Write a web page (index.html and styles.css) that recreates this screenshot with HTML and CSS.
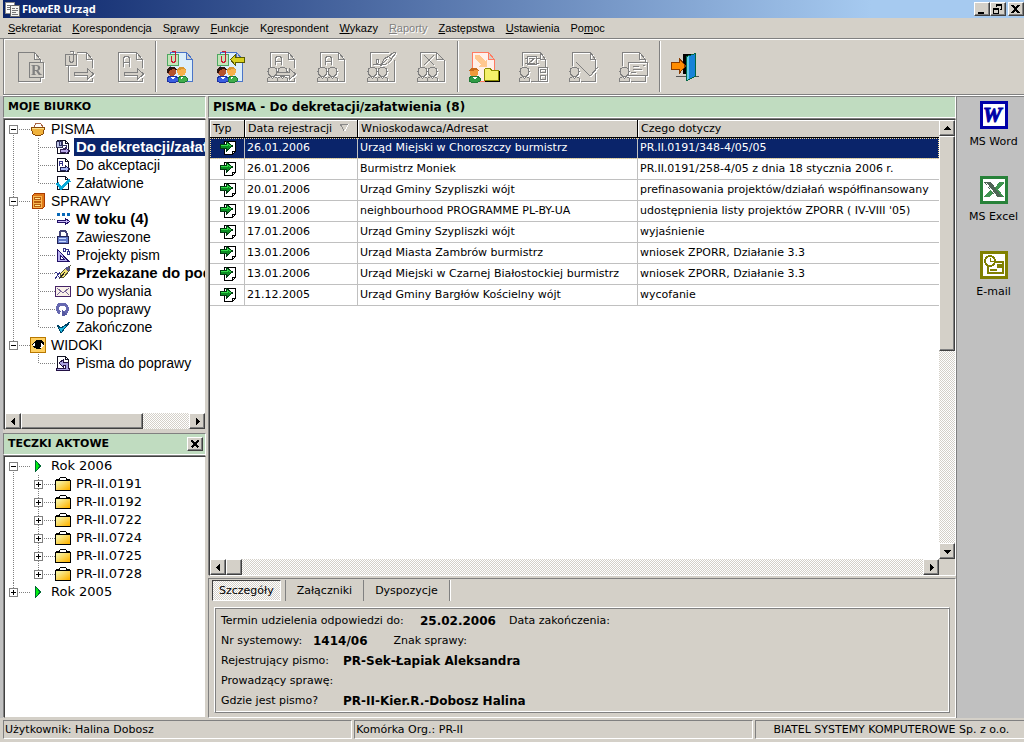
FILE: index.html
```html
<!DOCTYPE html>
<html lang="pl">
<head>
    <meta charset="UTF-8">
    <meta name="viewport" content="width=device-width, initial-scale=1.0">
    <title>FlowER Urząd</title>
    <link rel="stylesheet" href="styles.css">
</head>
<body>

<!-- icon shapes used more than once -->
<svg class="defs" width="0" height="0">
    <symbol id="doc" viewBox="0 0 32 32"><path d="M4.500 1.500h16l6 7v22h-22zM20.500 1.500v7h6"/></symbol>
    <symbol id="clip" viewBox="0 0 32 32"><path d="M1.500 3.500h11v11h-11z"/><path class="clip-wire" d="M5.500 5v5l1 1h2l1-1V1l-1-1H7L6 1"/></symbol>
    <symbol id="man" viewBox="0 0 32 32"><path d="M3 17.500l2-1h3l2 1 1 3-1 3-2 2H5l-2-2-1-3zM1.500 30.500v-3l3-2 2 2 2-2 3 2v3z"/></symbol>
    <symbol id="men" viewBox="0 0 32 32"><path d="M3 17.500l2-1h3l2 1 1 3-1 3-2 2H5l-2-2-1-3zM13 17.500l2-1h3l2 1 1 3-1 3-2 2h-3l-2-2-1-3zM1.500 30.500v-3l3-2 2 2 2-2 3 2v3zM11.500 30.500v-3l3-2 2 2 2-2 3 2v3z"/></symbol>
    <symbol id="arrow" viewBox="0 0 32 32"><path d="M10.500 21.500h13v-4l6 5.500-6 5.500v-4h-13z"/></symbol>
    <symbol id="people" viewBox="0 0 32 32">
        <path d="M1 30v-3l3-2h5l3 2v3l-2 1H3z" fill="#3a5fe0" stroke="#1c2fa0"/>
        <path d="M12 30v-3l3-2h4l2 2v3l-2 1h-6z" fill="#3fae4c" stroke="#1f7a35"/>
        <circle cx="6" cy="20.500" r="4.500" fill="#b5532c" stroke="none"/><path d="M1 22v-4l3-2h5l2 3-4-1-3 1-1 3z" fill="#2a1210" stroke="none"/>
        <circle cx="15.500" cy="20.500" r="4.500" fill="#f6b04a" stroke="none"/><path d="M11 20v-2l3-2h4l2 3-3-1-4 1z" fill="#d9962e" stroke="none"/>
        <path d="M5 26l2 3 2-3M15 26l1 3 1-3" fill="#fff" stroke="none"/>
    </symbol>
    <symbol id="incoming" viewBox="0 0 16 16">
        <path d="M4.500 1.500h11v10l-3 3h-8z" fill="#fff" stroke="#000"/><path d="M12.500 14v-2.500H15" fill="none" stroke="#000"/>
        <path d="M.5 4.500h6v-3l6 4.500-6 5v-3h-6z" fill="#0b8c22" stroke="#003c10"/><path d="M1 5.500h6.500v-2l3 2.500" fill="none" stroke="#35e04c"/>
    </symbol>
    <symbol id="folder" viewBox="0 0 16 16">
        <path d="M4.500 4V2.500l1-1h5l1 1V4" fill="none" stroke="#000"/><path d="M1 3.500h3M12 3.500h3" stroke="#000"/>
        <path d="M.5 4.500h15v10H.5z" fill="url(#gold)" stroke="#000"/>
    </symbol>
    <linearGradient id="gold" x1="0" y1="0" x2="1" y2="1"><stop offset=".2" stop-color="#f7ef9a"/><stop offset=".9" stop-color="#ffb400"/></linearGradient>
    <symbol id="play" viewBox="0 0 16 16"><path d="M5.500 2.500v11l5-5.500z" fill="#0e1" stroke="#063"/></symbol>
    <symbol id="page" viewBox="0 0 16 16"><path d="M2.500 1.500h8l3 3v10h-11z" fill="#fff" stroke="#112"/><path d="M10.500 1.500v3h3" fill="none" stroke="#112"/></symbol>
    <symbol id="left" viewBox="0 0 7 7"><path d="M5 0v7L1 3.500z"/></symbol>
    <symbol id="right" viewBox="0 0 7 7"><path d="M2 0v7l4-3.500z"/></symbol>
    <symbol id="up" viewBox="0 0 7 7"><path d="M0 5h7L3.500 1z"/></symbol>
    <symbol id="down" viewBox="0 0 7 7"><path d="M0 2h7L3.500 6z"/></symbol>
</svg>

<div class="window">
    <header class="titlebar">
        <svg class="app-icon" width="16" height="16" viewBox="0 0 16 16"><path d="M.5 1.500h9v11h-9z" fill="#fff" stroke="#888"/><path d="M5.500 4.500h9v11h-9z" fill="#f4f4ee" stroke="#666"/><path d="M2 4h5M2 6h3M2 8h3M7 7.500h3M11 7.500h2M7 9.500h6M7 11.500h4M7 13.500h6" stroke="#777"/></svg>
        <h1>FlowER Urząd</h1>
        <div class="window-buttons">
            <button class="win-btn" aria-label="Minimalizuj"><svg width="10" height="10" viewBox="0 0 10 10"><path d="M1 8h6v2H1z"/></svg></button>
            <button class="win-btn" aria-label="Przywróć"><svg width="10" height="10" viewBox="0 0 10 10"><path d="M3.500 3V.5h5v5H7M3 1.500h6M.5 4.500h5v5h-5zM0 5.500h6" fill="none" stroke="#000"/></svg></button>
            <button class="win-btn win-close" aria-label="Zamknij"><svg width="10" height="10" viewBox="0 0 10 10"><path d="M1 1l7 8M8 1L1 9" stroke="#000" stroke-width="2"/></svg></button>
        </div>
    </header>

    <nav class="menu">
        <a href="#"><u>S</u>ekretariat</a>
        <a href="#"><u>K</u>orespondencja</a>
        <a href="#">S<u>p</u>rawy</a>
        <a href="#"><u>F</u>unkcje</a>
        <a href="#">K<u>o</u>respondent</a>
        <a href="#"><u>W</u>ykazy</a>
        <a href="#" class="disabled"><u>R</u>aporty</a>
        <a href="#"><u>Z</u>astępstwa</a>
        <a href="#"><u>U</u>stawienia</a>
        <a href="#">Po<u>m</u>oc</a>
    </nav>

    <div class="toolbar">
        <div class="tool-group">
            <button class="tool off" aria-label="Rejestruj"><svg viewBox="0 0 32 32"><use href="#doc"/><path class="paper" d="M15.500 11.500h14v15h-14z"/><text x="17" y="24" class="tool-r">R</text></svg></button>
            <button class="tool off" aria-label="Przekaż pismo"><svg viewBox="0 0 32 32"><path d="M4.500 15v15.500h24V27M13 1.500h9.500l6 7V17M22.500 1.500v7h6"/><use href="#clip"/><use href="#arrow"/></svg></button>
            <button class="tool off" aria-label="Przekaż do akceptacji"><svg viewBox="0 0 32 32"><path d="M28.500 27v3.500h-24v-29h18l6 7V17M22.500 1.500v7h6"/><path d="M9.500 16V7l2-2h2l2 2v9M9.500 11.500h6"/><use href="#arrow"/></svg></button>
        </div>
        <div class="tool-group">
            <button class="tool" aria-label="Dekretuj"><svg viewBox="0 0 32 32"><g fill="#dceefa" stroke="#4a74c8"><use href="#doc"/></g><g class="green-clip"><use href="#clip"/></g><use href="#people"/></svg></button>
            <button class="tool" aria-label="Cofnij dekretację"><svg viewBox="0 0 32 32"><g fill="#dceefa" stroke="#4a74c8"><use href="#doc"/></g><g class="green-clip"><use href="#clip"/></g><use href="#people"/><path d="M14.500 8.500l5-5v3h9v5h-9v3z" fill="#d8d020" stroke="#5a5a00"/></svg></button>
            <button class="tool off" aria-label="Akceptuj i przekaż"><svg viewBox="0 0 32 32"><path d="M4.500 16V1.500h18l6 7V17M22.500 1.500v7h6M28.500 27v3.500h-8"/><path d="M9.500 14V7l2-2h2l2 2v7M9.500 10.500h6"/><use href="#men"/><use href="#arrow"/></svg></button>
            <button class="tool off" aria-label="Akceptuj"><svg viewBox="0 0 32 32"><path d="M4.500 16V1.500h18l6 7v22h-8M22.500 1.500v7h6"/><path d="M9.500 14V7l2-2h2l2 2v7M9.500 10.500h6"/><use href="#men"/></svg></button>
            <button class="tool off" aria-label="Podpisz"><svg viewBox="0 0 32 32"><path d="M4.500 16V1.500h18M28.500 9v21.500h-8"/><path d="M7 13l3 1 3-3-1-3-2 1 1 5 5-1M14.500 14.500l4-7 4-2 3 3-4 4zM22 6l6-5 2 1-5 6M16 13l5-5"/><use href="#men"/></svg></button>
            <button class="tool off" aria-label="Odrzuć"><svg viewBox="0 0 32 32"><path d="M4.500 16V1.500h16l8 8v21h-8M20.500 1.500v7h7M8 4l10 10M18 4L8 14"/><use href="#men"/></svg></button>
        </div>
        <div class="tool-group">
            <button class="tool" aria-label="Załóż sprawę"><svg viewBox="0 0 32 32"><g fill="#fff0ea" stroke="#ff7a60"><use href="#doc"/></g><path d="M7 4h5l5 6 2-2v8h-9l3-3-6-5z" fill="#ffc890"/><path d="M1 30v-3l3-2h5l3 2v3l-2 1H3z" fill="#2f9a45" stroke="#1f7a35"/><circle cx="6" cy="21" r="4.500" fill="#f09a3a"/><path d="M1 20l2-3h6l2 3-3-1-5 1z" fill="#c76a1c"/><path d="M5 26l2 3 2-3" fill="#fff"/><path d="M16.500 18.500l1-1h5l1 2h6.500v10H16.500z" fill="#f4f06a" stroke="#8a8a00"/><path d="M17 30.500h14V20" fill="none" stroke="#000"/></svg></button>
            <button class="tool off" aria-label="Dołącz do sprawy"><svg viewBox="0 0 32 32"><path d="M4.500 15V1.500h18l5 7v7M22.500 1.500v7h5M13 30.500h7M9.500 5.500h9v8h-9zM6.500 7.500h3M19 7.500h3M7 12h3M18 12h3M11 7h6l-6 5h6M20.500 16.500h9v14h-9zM22.500 18.500h5v3h-5zM22.500 24.500h5v4h-5z"/><use href="#man"/></svg></button>
            <button class="tool off" aria-label="Zatwierdź"><svg viewBox="0 0 32 32"><path d="M4.500 15V1.500h18l5 7v9M22.500 1.500v7h5M13 30.500h14.500V22M8 11l14 14 8-9"/><use href="#man"/></svg></button>
            <button class="tool off" aria-label="Wyślij odpowiedź"><svg viewBox="0 0 32 32"><path d="M4.500 15V1.500h17l6 7v3M21.500 1.500v7h6M13 30.500h14.500V25M10.500 11.500h19v13h-19zM15 15.500h6M15 18.500h9M13 21.500h5M25 14.500h2"/><use href="#man"/></svg></button>
        </div>
        <div class="tool-group">
            <button class="tool" aria-label="Wyjście"><svg viewBox="0 0 32 32"><path d="M6 25.500h23" stroke="#555"/><path d="M13 3h12v20H13z" fill="#000"/><path d="M16.500 5.500l9-3v23l-9 4z" fill="#1782d8" stroke="#064"/><path d="M17 6v23l2-1V5z" fill="#63cbe8"/><path d="M1.500 11.500h8v-4l6 7.500-6 7v-4h-8z" fill="#ff8c00" stroke="#8a3c00"/></svg></button>
        </div>
    </div>

    <main class="workspace">
        <aside class="sidebar">
            <section class="desk">
                <h2 class="panel-title">MOJE BIURKO</h2>
                <div class="tree-box">
                    <ul class="tree">
                        <li>
                            <div class="row"><button class="toggle minus" aria-label="Zwiń PISMA"></button><span class="stub"></span><svg class="ico" viewBox="0 0 16 16"><path d="M4 6l2-4 5 1 2 3" fill="#fff" stroke="#a64"/><path d="M1 6h14l-2 7-2 1H5l-2-1z" fill="#f0b23c" stroke="#8a4a08"/><path d="M2 7.500h12" stroke="#fbe08a"/></svg><span class="label">PISMA</span></div>
                            <ul>
                                <li><div class="row"><span class="stub"></span><svg class="ico" viewBox="0 0 16 16"><use href="#page"/><path d="M1.500 2.500h6v6h-6z" fill="#bcc4e8" stroke="#335"/><path d="M4.500 1v5h2V2M8 6h3v3H8" fill="none" stroke="#336"/><path d="M5 10.500h5v-2l5 3.500-5 3v-2H5z" fill="#b8a8e8" stroke="#325"/></svg><span class="label strong selected">Do dekretacji/załatwienia</span></div></li>
                                <li><div class="row"><span class="stub"></span><svg class="ico" viewBox="0 0 16 16"><use href="#page"/><path d="M4.500 9V5l1-1h1l1 1v4M5 6.500h2" fill="none" stroke="#338"/><path d="M5 10.500h5v-2l5 3.500-5 3v-2H5z" fill="#a8b8f8" stroke="#225"/></svg><span class="label">Do akceptacji</span></div></li>
                                <li><div class="row"><span class="stub"></span><svg class="ico" viewBox="0 0 16 16"><use href="#page"/><path d="M2 8l4 5 9-8" fill="none" stroke="#08a8d8" stroke-width="3"/></svg><span class="label">Załatwione</span></div></li>
                            </ul>
                        </li>
                        <li>
                            <div class="row"><button class="toggle minus" aria-label="Zwiń SPRAWY"></button><span class="stub"></span><svg class="ico" viewBox="0 0 16 16"><path d="M2.500 2.500l2-2h10v13l-2 2h-10z" fill="#e07818" stroke="#a83c00"/><path d="M3 3h9v12H3z" fill="#f8b850"/><path d="M4.500 4.500h6v2h-6zM4.500 8.500h6v1h-6zM4.500 11.500h6v2h-6z" fill="#ffe890" stroke="#b85c10"/></svg><span class="label">SPRAWY</span></div>
                            <ul>
                                <li><div class="row"><span class="stub"></span><svg class="ico" viewBox="0 0 16 16"><path d="M2 2h3v3H2zM7 2h3v3H7zM12 2h3v3h-3z" fill="#0868b8"/><path d="M2.500 9.500h8v-2l4 3-4 3v-2h-8z" fill="#c8b8f8" stroke="#216"/></svg><span class="label strong">W toku (4)</span></div></li>
                                <li><div class="row"><span class="stub"></span><svg class="ico" viewBox="0 0 16 16"><path d="M4.500 8V4l2-2.500h3L11.500 4v4" fill="none" stroke="#447" stroke-width="2"/><path d="M2.500 7.500h11v7h-11z" fill="#6078c8" stroke="#225"/><path d="M4 9.500h7M4 12.500h7" stroke="#c8d8ff"/></svg><span class="label">Zawieszone</span></div></li>
                                <li><div class="row"><span class="stub"></span><svg class="ico" viewBox="0 0 16 16"><path d="M2 2v12.500h12zM5 8v4h4z" fill="#b8b0f0" stroke="#216" fill-rule="evenodd"/><path d="M8.500 1.500h2v3h-2zM12.500 4.500h2v3h-2zM10 2h3v3" fill="none" stroke="#338"/></svg><span class="label">Projekty pism</span></div></li>
                                <li><div class="row"><span class="stub"></span><svg class="ico" viewBox="0 0 16 16"><path d="M0 7l2 1 1 3 2 2M5 7l-2 3-3 4" fill="none" stroke="#338"/><path d="M5 13l1-5 5-5 4-2-1 5-5 6z" fill="#f0e070" stroke="#553"/><path d="M10 3l4-2 1 3-2 3z" fill="#558"/><path d="M5 13l5-6" stroke="#222"/></svg><span class="label strong">Przekazane do podpisu</span></div></li>
                                <li><div class="row"><span class="stub"></span><svg class="ico" viewBox="0 0 16 16"><path d="M.5 3.500h15v10H.5z" fill="#f8f0e8" stroke="#426"/><path d="M2 5l6 5 6-5M2 12l4-4M14 12l-4-4" fill="none" stroke="#769"/></svg><span class="label">Do wysłania</span></div></li>
                                <li><div class="row"><span class="stub"></span><svg class="ico" viewBox="0 0 16 16"><path d="M5 12C1 9 2 3 7 3c6 0 7 6 3 9" fill="none" stroke="#6668b0" stroke-width="3"/><path d="M7 9v6l5-1z" fill="#5558a0"/></svg><span class="label">Do poprawy</span></div></li>
                                <li><div class="row"><span class="stub"></span><svg class="ico" viewBox="0 0 16 16"><path d="M2 6l4 3 9-6-9 11z" fill="#18b8e0" stroke="#046"/></svg><span class="label">Zakończone</span></div></li>
                            </ul>
                        </li>
                        <li>
                            <div class="row"><button class="toggle minus" aria-label="Zwiń WIDOKI"></button><span class="stub"></span><svg class="ico" viewBox="0 0 16 16"><path d="M.5.5h15v15H.5z" fill="#ffd060" stroke="#b87800"/><path d="M2 8l3-3h6l3 3-3 3H6z" fill="#fff"/><path d="M2 8l2-3 3-2h4l3 3v3l-2-3H5z"/><circle cx="8" cy="8" r="3"/><path d="M3 9l3 2h5" fill="none" stroke="#000"/></svg><span class="label">WIDOKI</span></div>
                            <ul>
                                <li><div class="row"><span class="stub"></span><svg class="ico" viewBox="0 0 16 16"><use href="#page"/><path d="M4 8l4-3v2h5v6h1.500v2h-13v-2h9v-3h-2.500v2z" fill="#a8a0e0" stroke="#214"/></svg><span class="label">Pisma do poprawy</span></div></li>
                            </ul>
                        </li>
                    </ul>
                    <div class="scroll-h">
                        <button class="sb" aria-label="W lewo"><svg width="7" height="7"><use href="#left"/></svg></button>
                        <div class="thumb thumb-tree"></div>
                        <div class="track"></div>
                        <button class="sb" aria-label="W prawo"><svg width="7" height="7"><use href="#right"/></svg></button>
                    </div>
                </div>
            </section>

            <section class="files">
                <div class="panel-title">
                    <h2>TECZKI AKTOWE</h2>
                    <button class="win-btn panel-close" aria-label="Zamknij teczki"><svg width="10" height="10" viewBox="0 0 10 10"><path d="M1.500 1.500l7 7M8.500 1.500l-7 7" stroke="#000" stroke-width="2"/></svg></button>
                </div>
                <div class="tree-box">
                    <ul class="tree wide">
                        <li>
                            <div class="row"><button class="toggle minus" aria-label="Zwiń Rok 2006"></button><span class="stub"></span><svg class="ico"><use href="#play"/></svg><span class="label">Rok 2006</span></div>
                            <ul class="nodes">
                                <li><div class="row"><button class="toggle plus" aria-label="Rozwiń PR-II.0191"></button><span class="stub"></span><svg class="ico"><use href="#folder"/></svg><span class="label">PR-II.0191</span></div></li>
                                <li><div class="row"><button class="toggle plus" aria-label="Rozwiń PR-II.0192"></button><span class="stub"></span><svg class="ico"><use href="#folder"/></svg><span class="label">PR-II.0192</span></div></li>
                                <li><div class="row"><button class="toggle plus" aria-label="Rozwiń PR-II.0722"></button><span class="stub"></span><svg class="ico"><use href="#folder"/></svg><span class="label">PR-II.0722</span></div></li>
                                <li><div class="row"><button class="toggle plus" aria-label="Rozwiń PR-II.0724"></button><span class="stub"></span><svg class="ico"><use href="#folder"/></svg><span class="label">PR-II.0724</span></div></li>
                                <li><div class="row"><button class="toggle plus" aria-label="Rozwiń PR-II.0725"></button><span class="stub"></span><svg class="ico"><use href="#folder"/></svg><span class="label">PR-II.0725</span></div></li>
                                <li><div class="row"><button class="toggle plus" aria-label="Rozwiń PR-II.0728"></button><span class="stub"></span><svg class="ico"><use href="#folder"/></svg><span class="label">PR-II.0728</span></div></li>
                            </ul>
                        </li>
                        <li>
                            <div class="row"><button class="toggle plus" aria-label="Rozwiń Rok 2005"></button><span class="stub"></span><svg class="ico"><use href="#play"/></svg><span class="label">Rok 2005</span></div>
                        </li>
                    </ul>
                </div>
            </section>
        </aside>

        <section class="content">
            <h2 class="panel-title list-title">PISMA - Do dekretacji/załatwienia (8)</h2>
            <div class="grid-box">
                <div class="grid-main">
                    <div class="grid-view">
                        <table>
                            <colgroup><col class="c-type"><col class="c-date"><col class="c-from"><col></colgroup>
                            <thead>
                                <tr><th>Typ</th><th>Data rejestracji <svg class="sort" width="9" height="8" viewBox="0 0 9 8"><path d="M8.500.5h-8l4 7" fill="none" stroke="#888"/><path d="M8.500.5L4.500 7.500" stroke="#fff"/></svg></th><th>Wnioskodawca/Adresat</th><th>Czego dotyczy</th></tr>
                            </thead>
                            <tbody>
                                <tr class="current"><td><svg class="ico"><use href="#incoming"/></svg></td><td>26.01.2006</td><td>Urząd Miejski w Choroszczy burmistrz</td><td>PR.II.0191/348-4/05/05</td></tr>
                                <tr><td><svg class="ico"><use href="#incoming"/></svg></td><td>26.01.2006</td><td>Burmistrz Moniek</td><td>PR.II.0191/258-4/05 z dnia 18 stycznia 2006 r.</td></tr>
                                <tr><td><svg class="ico"><use href="#incoming"/></svg></td><td>20.01.2006</td><td>Urząd Gminy Szypliszki wójt</td><td>prefinasowania projektów/działań współfinansowany</td></tr>
                                <tr><td><svg class="ico"><use href="#incoming"/></svg></td><td>19.01.2006</td><td>neighbourhood PROGRAMME PL-BY-UA</td><td>udostępnienia listy projektów ZPORR ( IV-VIII '05)</td></tr>
                                <tr><td><svg class="ico"><use href="#incoming"/></svg></td><td>17.01.2006</td><td>Urząd Gminy Szypliszki wójt</td><td>wyjaśnienie</td></tr>
                                <tr><td><svg class="ico"><use href="#incoming"/></svg></td><td>13.01.2006</td><td>Urząd Miasta Zambrów burmistrz</td><td>wniosek ZPORR, Działanie 3.3</td></tr>
                                <tr><td><svg class="ico"><use href="#incoming"/></svg></td><td>13.01.2006</td><td>Urząd Miejski w Czarnej Białostockiej burmistrz</td><td>wniosek ZPORR, Działanie 3.3</td></tr>
                                <tr><td><svg class="ico"><use href="#incoming"/></svg></td><td>21.12.2005</td><td>Urząd Gminy Bargłów Kościelny wójt</td><td>wycofanie</td></tr>
                            </tbody>
                        </table>
                    </div>
                    <div class="scroll-v">
                        <button class="sb" aria-label="W górę"><svg width="7" height="7"><use href="#up"/></svg></button>
                        <div class="thumb thumb-rows"></div>
                        <div class="track"></div>
                        <button class="sb" aria-label="W dół"><svg width="7" height="7"><use href="#down"/></svg></button>
                    </div>
                </div>
                <div class="scroll-h with-corner">
                    <button class="sb" aria-label="W lewo"><svg width="7" height="7"><use href="#left"/></svg></button>
                    <div class="thumb thumb-cols"></div>
                    <div class="track"></div>
                    <button class="sb" aria-label="W prawo"><svg width="7" height="7"><use href="#right"/></svg></button>
                </div>
            </div>

            <div class="details">
                <div class="tabs">
                    <button class="tab active">Szczegóły</button>
                    <button class="tab">Załączniki</button>
                    <button class="tab">Dyspozycje</button>
                </div>
                <div class="detail-box">
                    <p><span class="key-long">Termin udzielenia odpowiedzi do:</span><b>25.02.2006</b><span class="second">Data zakończenia:</span></p>
                    <p><span class="key-short">Nr systemowy:</span><b>1414/06</b><span class="second far">Znak sprawy:</span></p>
                    <p><span class="key">Rejestrujący pismo:</span><b>PR-Sek-Łapiak Aleksandra</b></p>
                    <p><span class="key">Prowadzący sprawę:</span></p>
                    <p><span class="key">Gdzie jest pismo?</span><b>PR-II-Kier.R.-Dobosz Halina</b></p>
                </div>
            </div>
        </section>

        <aside class="apps">
            <a href="#"><svg width="28" height="28" viewBox="0 0 28 28"><path d="M0 0h28v28H0z" fill="#0000a8"/><path d="M3 3h22v22H3z" fill="#fff"/><text x="3" y="21" class="word-w">W</text></svg>MS Word</a>
            <a href="#"><svg width="28" height="28" viewBox="0 0 28 28"><path d="M0 0h28v28H0z" fill="#28823a"/><path d="M3 3h22v22H3z" fill="#fff"/><path d="M15 12l4-6h5v1l-6 6 6 8h-8l-3-4-4 4H4v-1l7-6z" fill="#3f9450"/><path d="M4 6h7l11 15h-6z" fill="#4f6456"/><path d="M6 7l11 14" stroke="#fff"/></svg>MS Excel</a>
            <a href="#"><svg width="28" height="28" viewBox="0 0 28 28"><path d="M0 0h28v28H0z" fill="#808000"/><path d="M3 3h22v22H3z" fill="#fff"/><path d="M8 14v8h15V11h-7M18 14h3v2h-3zM10 19h7" fill="none" stroke="#808000" stroke-width="2"/><circle cx="10" cy="10" r="5" fill="#fff" stroke="#808000" stroke-width="2"/><path d="M10.500 7v3.500H14" fill="none" stroke="#808000"/></svg>E-mail</a>
        </aside>
    </main>

    <footer class="statusbar">
        <span>Użytkownik: Halina Dobosz</span>
        <span>Komórka Org.: PR-II</span>
        <span class="vendor">BIATEL SYSTEMY KOMPUTEROWE Sp. z o.o.</span>
    </footer>
</div>
</body>
</html>
```
FILE: styles.css
```css
* {
    box-sizing: border-box;
}
body {
    margin: 0;
    background: #d4d0c8;
    color: #000;
    font: 11px/16px "DejaVu Sans", Verdana, sans-serif;
}
h1, h2, p, ul {
    margin: 0;
    padding: 0;
}
ul {
    list-style: none;
}
button {
    font: inherit;
    color: inherit;
    padding: 0;
    margin: 0;
    border: 0;
    background: #d4d0c8;
}
a {
    color: inherit;
    text-decoration: none;
}
svg {
    display: block;
    flex: none;
    shape-rendering: crispEdges;
}
.defs {
    position: absolute;
}
.window {
    min-height: 100vh;
    display: flex;
    flex-direction: column;
    padding-bottom: 3px;
    overflow: hidden;
}

/* title bar and menu */
.titlebar {
    display: flex;
    align-items: center;
    height: 18px;
    margin-left: 3px;
    padding-left: 2px;
    background: linear-gradient(to right, #0a246a, #a6caf0 85%);
    color: #fff;
}
.titlebar h1 {
    flex: 1;
    margin-left: 1px;
    font: bold 11px/16px "Noto Sans", Tahoma, sans-serif;
}
.window-buttons {
    display: flex;
    align-self: flex-end;
    margin-bottom: 2px;
}
.win-btn, .sb, .thumb {
    display: flex;
    align-items: center;
    justify-content: center;
    background: #d4d0c8;
    border: 1px solid #404040;
    border-top-color: #fff;
    border-left-color: #fff;
    box-shadow: inset -1px -1px #808080;
}
.win-btn {
    width: 16px;
    height: 14px;
}
.win-close {
    margin-left: 2px;
}
.menu {
    display: flex;
    gap: 11px;
    height: 21px;
    padding: 2px 8px;
    border-bottom: 1px solid #808080;
    font: 11px/16px "Liberation Sans", Tahoma, sans-serif;
}
.menu .disabled {
    color: #808080;
    text-shadow: 1px 1px #fff;
}

/* toolbar */
.toolbar {
    display: flex;
    height: 56px;
    margin-left: 3px;
    padding: 2px 0 2px 1px;
    border: solid #808080;
    border-width: 0 0 1px 1px;
    box-shadow: inset 1px 1px #fff, 0 1px #fff;
}
.tool-group {
    display: flex;
}
.tool-group + .tool-group {
    padding-left: 1px;
}
.tool-group:not(:last-child) {
    border-right: 1px solid #808080;
    box-shadow: 1px 0 #fff;
}
.tool {
    display: flex;
    align-items: center;
    justify-content: center;
    width: 50px;
    background: none;
}
.tool svg {
    width: 32px;
    height: 32px;
}
.off svg {
    fill: none;
    stroke: #808080;
    filter: drop-shadow(1px 1px 0 #fff);
}
.off .paper, .off use {
    fill: #d4d0c8;
}
.tool-r {
    font: bold 15px "Liberation Serif", serif;
    stroke: none;
    fill: #808080;
}
.green-clip {
    fill: #c4e4b8;
    stroke: #4ea860;
    --wire: #d01830;
}
.clip-wire {
    fill: none;
    stroke: var(--wire, #808080);
}

/* three columns */
.workspace {
    flex: 1;
    display: flex;
    margin-top: 1px;
    border-left: 3px solid #c0c0c0;
}
.sidebar {
    width: 203px;
    display: flex;
    flex-direction: column;
    gap: 3px;
    margin-right: 2px;
}
.panel-title {
    display: flex;
    align-items: center;
    justify-content: space-between;
    height: 22px;
    padding: 0 4px;
    background: #c0dcc0;
    border: 1px solid #808080;
    border-right-color: #fff;
    border-bottom-color: #fff;
    font-size: 11px;
    font-weight: bold;
}
.panel-title h2 {
    font-size: inherit;
}
.list-title {
    font-size: 12px;
}
.panel-close {
    margin-right: -2px;
}
.tree-box {
    flex: 1;
    display: flex;
    flex-direction: column;
    min-height: 0;
    margin: 1px 0 0 1px;
    background: #fff;
    border: 1px solid #404040;
    border-right-color: #d4d0c8;
    border-bottom-color: #d4d0c8;
    box-shadow: -1px -1px #808080;
}
.desk, .files {
    display: flex;
    flex-direction: column;
}
.desk {
    flex: 335 1 0;
}
.files {
    flex: 285 1 0;
}

/* tree */
.tree {
    flex: 1;
    overflow: hidden;
    font: 14px/18px "Liberation Sans", Arial, sans-serif;
}
.tree li {
    background: repeating-linear-gradient(#808080 0 1px, #fff 1px 2px) 8px 0 / 1px 100% no-repeat;
}
.tree > li:first-child {
    background-position: 8px 9px;
}
.tree > li:last-child {
    background-size: 1px 9px;
}
.tree li li {
    background-position: 33px 0;
}
.tree li li:last-child {
    background-size: 1px 9px;
}
.row {
    display: flex;
    align-items: center;
    height: 18px;
    padding-left: 4px;
    white-space: nowrap;
}
li li .row {
    padding-left: 34px;
}
.nodes li .row {
    padding-left: 29px;
}
.toggle {
    flex: none;
    width: 9px;
    height: 9px;
    border: 1px solid #808080;
    background: linear-gradient(#000, #000) center / 5px 1px no-repeat #fff;
}
.toggle.plus {
    background: linear-gradient(#000, #000) center / 5px 1px no-repeat, linear-gradient(#000, #000) center / 1px 5px no-repeat #fff;
}
.stub {
    flex: none;
    width: 12px;
    height: 1px;
    background: repeating-linear-gradient(to right, #fff 0 1px, #808080 1px 2px);
}
li li .stub {
    width: 16px;
}
.nodes li .stub {
    width: 12px;
}
.ico {
    width: 16px;
    height: 16px;
}
.label {
    min-width: 0;
    margin-left: 3px;
    padding: 0 2px;
    overflow: hidden;
}
.strong {
    padding-right: 0;
    font-size: 15px;
    font-weight: bold;
}
.selected {
    background: #0a246a;
    color: #fff;
}
.wide {
    font: 13px/18px "DejaVu Sans", Verdana, sans-serif;
}

/* scroll bars */
.scroll-h {
    display: flex;
    height: 16px;
}
.scroll-v {
    display: flex;
    flex-direction: column;
    width: 16px;
}
.sb {
    flex: none;
    width: 16px;
    height: 16px;
}
.track {
    flex: 1;
    background: repeating-conic-gradient(#fff 0 25%, #d4d0c8 0 50%) 0 0 / 2px 2px;
}
.thumb-tree {
    width: 61%;
}
.thumb-cols {
    width: 16px;
}
.thumb-rows {
    height: 49%;
}
.with-corner {
    padding-right: 16px;
    background: #d4d0c8;
}

/* document list */
.content {
    flex: 1;
    min-width: 0;
    display: flex;
    flex-direction: column;
}
.grid-box {
    flex: 1;
    display: flex;
    flex-direction: column;
    margin: 1px 0 0 1px;
    border: 1px solid #404040;
    border-right-color: #fff;
    border-bottom-color: #fff;
    box-shadow: -1px -1px #808080;
}
.grid-main {
    flex: 1;
    display: flex;
}
.grid-view {
    flex: 1;
    min-width: 0;
    background: #fff;
}
table {
    width: 100%;
    table-layout: fixed;
    border-collapse: separate;
    border-spacing: 0;
}
.c-type {
    width: 35px;
}
.c-date {
    width: 113px;
}
.c-from {
    width: 280px;
}
th {
    height: 18px;
    padding: 0 0 0 3px;
    background: #d4d0c8;
    border: solid #000;
    border-width: 0 1px 1px 0;
    box-shadow: inset 1px 1px #fff;
    font-weight: normal;
    line-height: 16px;
    text-align: left;
    white-space: nowrap;
}
th:last-child {
    border-right: 0;
}
td {
    height: 21px;
    padding: 0 0 0 2px;
    border: solid #c0c0c0;
    border-width: 0 1px 1px 0;
    line-height: 18px;
    white-space: nowrap;
    overflow: hidden;
}
td:last-child {
    border-right: 0;
}
td .ico {
    margin: 0 auto;
}
.current {
    outline: 1px dotted #f5db95;
    outline-offset: -1px;
}
.current td {
    background: #0a246a;
    color: #fff;
}
.sort {
    display: inline-block;
    margin-left: 4px;
}

/* details */
.details {
    margin-top: 2px;
    padding: 1px 5px 4px 3px;
    border: 1px solid #808080;
    border-right-color: #fff;
    border-bottom-color: #fff;
}
.tabs {
    display: flex;
}
.tab {
    height: 21px;
    padding: 0 11px;
    border-right: 1px solid #808080;
    box-shadow: 1px 0 #fff;
}
.tab.active {
    margin-right: 5px;
    padding: 0 6px;
    border: 1px solid #fff;
    border-top-color: #404040;
    border-left-color: #404040;
    box-shadow: 4px 0 #d4d0c8, 5px 0 #808080;
    background: repeating-conic-gradient(#fff 0 25%, #d4d0c8 0 50%) 0 0 / 2px 2px;
}
.detail-box {
    margin: 6px 0 0 2px;
    padding: 3px 6px 1px;
    border: 1px solid #808080;
    border-top-color: #fff;
    border-left-color: #fff;
    box-shadow: inset 1px 1px #808080, inset -1px -1px #fff;
}
.detail-box p {
    display: flex;
    gap: 8px;
    line-height: 20px;
    white-space: nowrap;
}
.detail-box b {
    font-size: 12px;
}
.key {
    width: 114px;
}
.key-long {
    width: 191px;
}
.key-short {
    width: 84px;
}
.second {
    margin-left: 5px;
}
.far {
    margin-left: 18px;
}

/* application shortcuts */
.apps {
    width: 68px;
    display: flex;
    flex-direction: column;
    gap: 24px;
    padding: 4px 0 0 6px;
    background: #c0c0c0;
    border: solid #808080;
    border-width: 1px 0 0 1px;
}
.apps a {
    display: flex;
    flex-direction: column;
    align-items: center;
    gap: 5px;
    height: 51px;
    white-space: nowrap;
}
.word-w {
    font: italic bold 21px "Liberation Serif", serif;
    fill: #0000a8;
    stroke: #0000a8;
}

/* status bar */
.statusbar {
    display: grid;
    grid-template-columns: 350fr 399fr 270fr;
    gap: 2px;
    height: 19px;
    margin: 2px 0 0 3px;
}
.statusbar span {
    padding-left: 1px;
    border: 1px solid #808080;
    border-right-color: #fff;
    border-bottom-color: #fff;
    line-height: 18px;
    white-space: nowrap;
    overflow: hidden;
}
.statusbar .vendor {
    padding-left: 18px;
    border-right: 0;
}
```
